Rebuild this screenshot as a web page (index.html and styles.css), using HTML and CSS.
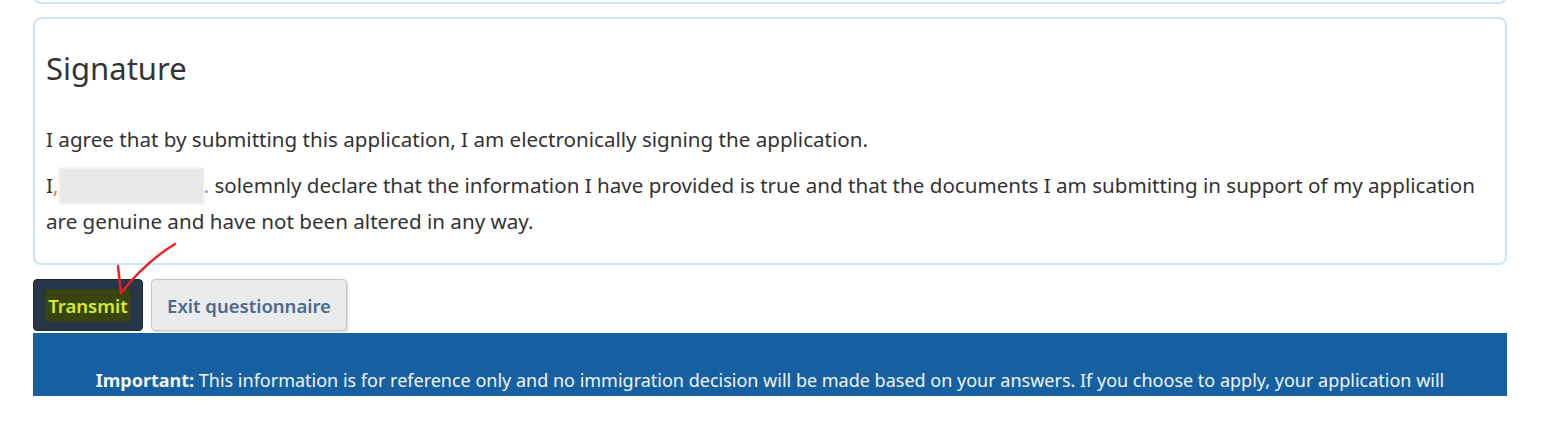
FILE: index.html
```html
<!DOCTYPE html>
<html lang="en">
<head>
<meta charset="utf-8">
<title>Signature</title>
<link rel="stylesheet" href="styles.css">
</head>
<body>
<div class="page">
  <div class="card card-prev"></div>
  <section class="card card-sig">
    <h2 class="sig-title">Signature</h2>
    <p class="sig-text">I agree that by submitting this application, I am electronically signing the application.</p>
    <p class="sig-text">I<span class="comma">,</span><span class="redact"></span><span class="dot">.</span> solemnly declare that the information I have provided is true and that the documents I am submitting in support of my application are genuine and have not been altered in any way.</p>
  </section>
  <div class="actions">
    <button class="btn btn-primary"><span class="hl">Transmit</span></button>
    <button class="btn btn-default">Exit questionnaire</button>
    <svg class="arrow" width="90" height="70" viewBox="0 0 90 70">
      <path d="M75 13 C 60 22, 40 38, 21 62" fill="none" stroke="#ee1c24" stroke-width="2.4" stroke-linecap="round"/>
      <path d="M18 35 L 21 62" fill="none" stroke="#ee1c24" stroke-width="2.4" stroke-linecap="round"/>
    </svg>
  </div>
  <div class="banner">
    <p class="banner-text"><strong>Important:</strong> This information is for reference only and no immigration decision will be made based on your answers. If you choose to apply, your application will</p>
  </div>
</div>
</body>
</html>
```

FILE: styles.css
```css
html, body {
  margin: 0;
  padding: 0;
  background: #ffffff;
}
body {
  font-family: "Noto Sans", "Open Sans", sans-serif;
  color: #333333;
  height: 422px;
  overflow: hidden;
}
.page {
  width: 1474px;
  margin-left: 33px;
}
.card {
  border: 2px solid #cbe5f6;
  border-radius: 8px;
  box-sizing: border-box;
  background: #fff;
}
.card-prev {
  height: 26px;
  margin-top: -22px;
  width: 1474px;
}
.card-sig {
  margin-top: 13px;
  height: 248px;
  padding: 0 11px;
}
.sig-title {
  font-weight: 400;
  font-size: 31px;
  line-height: 40px;
  margin: 29px 0 34px;
  color: #333;
}
.sig-text {
  font-size: 20.6px;
  line-height: 34px;
  margin: 0 0 12px;
  color: #333;
}
.comma { color: #c9882a; }
.dot { color: #6ba3d6; }
.redact {
  display: inline-block;
  width: 145px;
  height: 36px;
  vertical-align: -11px;
  background: #e8e8e8;
  filter: blur(1px);
}
.actions {
  position: relative;
  display: flex;
  gap: 8px;
  margin-top: 14px;
  height: 52px;
}
.btn {
  font-family: "Noto Sans", "Open Sans", sans-serif;
  font-size: 18.5px;
  height: 52px;
  border-radius: 4px;
  box-sizing: border-box;
  padding: 0 10px;
  cursor: pointer;
}
.btn-primary {
  width: 110px;
  background: #26374a;
  border: 1px solid #1c2836;
  color: #d8ec2c;
  font-weight: 600;
}
.hl {
  background: #39450f;
  padding: 3px 2px;
  box-shadow: 0 0 4px #39450f;
}
.btn-default {
  width: 196px;
  background: #eaebed;
  border: 1px solid #c6c6c6;
  color: #4e6a8e;
  font-weight: 600;
  box-shadow: 1px 1px 2px rgba(0,0,0,0.15);
}
.arrow {
  position: absolute;
  left: 67px;
  top: -48px;
}
.banner {
  margin-top: 2px;
  height: 63px;
  background: #1660a1;
  overflow: hidden;
  text-align: center;
  color: #f2f4f8;
}
.banner-text {
  margin: 0;
  padding-top: 35px;
  font-size: 18px;
  line-height: 24px;
}
```
